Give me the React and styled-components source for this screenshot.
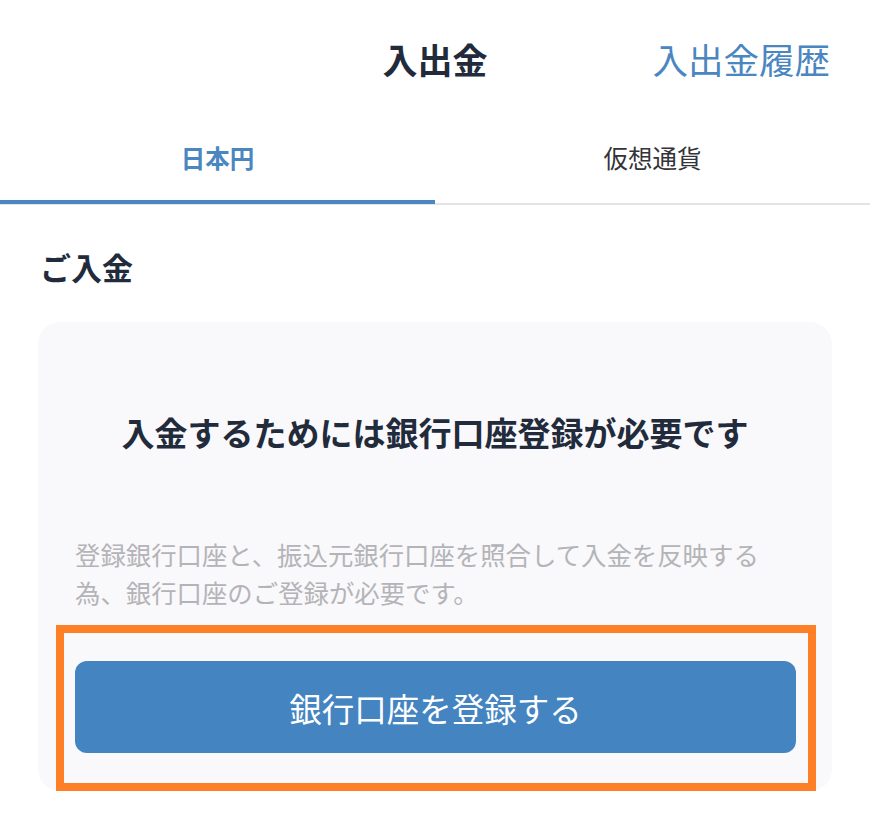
import React, { useState } from "react";
import styled, { createGlobalStyle } from "styled-components";

const GlobalStyle = createGlobalStyle`
    body {
        margin: 0;
        background: #ffffff;
        font-family: "Noto Sans CJK JP", "Noto Sans", sans-serif;
    }
`;

const Page = styled.div`
    width: 870px;
    min-height: 822px;
    background: #ffffff;
`;

const Header = styled.header`
    height: 118px;
    display: grid;
    grid-template-columns: 1fr auto 1fr;
    align-items: center;
    padding-bottom: 2px;
    box-sizing: border-box;
`;

const Title = styled.h1`
    grid-column: 2;
    margin: 0;
    font-size: 35px;
    font-weight: 700;
    color: #222b3b;
`;

const HistoryLink = styled.a`
    justify-self: end;
    padding-right: 40px;
    font-size: 35.5px;
    font-weight: 400;
    color: #4a86bf;
    text-decoration: none;
`;

const TabBar = styled.nav`
    display: flex;
    border-bottom: 2px solid #e4e4e6;
`;

const Tab = styled.button`
    flex: 1;
    height: 86px;
    padding: 0 0 4px;
    border: none;
    border-bottom: 4px solid ${(p) => (p.$active ? "#4a86bf" : "transparent")};
    margin-bottom: -1px;
    background: none;
    font-family: inherit;
    font-size: 24.5px;
    font-weight: ${(p) => (p.$active ? 700 : 400)};
    color: ${(p) => (p.$active ? "#4a86bf" : "#333338")};
    cursor: pointer;
`;

const SectionTitle = styled.h2`
    margin: 40px 0 34px 40px;
    font-size: 31px;
    line-height: 43px;
    font-weight: 700;
    color: #222b3b;
`;

const Card = styled.section`
    margin: 0 38px;
    padding: 87px 0 0;
    background: #f9f8fa;
    border-radius: 22px;
`;

const CardTitle = styled.h3`
    margin: 0;
    text-align: center;
    font-size: 33px;
    line-height: 46px;
    font-weight: 700;
    color: #222b3b;
`;

const Description = styled.p`
    margin: 80px 0 14px 37px;
    max-width: 700px;
    font-size: 25.4px;
    line-height: 38px;
    color: #b4b4b8;
`;

const Highlight = styled.div`
    margin: 0 16px -2px 18px;
    padding: 28px 12px 30px 11px;
    border: 8px solid #ff7f27;
`;

const PrimaryButton = styled.button`
    display: flex;
    align-items: center;
    justify-content: center;
    width: 100%;
    height: 92px;
    border: none;
    border-radius: 12px;
    background: #4384c1;
    color: #ffffff;
    font-family: inherit;
    font-size: 32.5px;
    font-weight: 400;
    cursor: pointer;
`;

const tabs = ["日本円", "仮想通貨"];

export default function App() {
    const [active, setActive] = useState(0);

    return (
        <Page>
            <GlobalStyle />
            <Header>
                <Title>入出金</Title>
                <HistoryLink href="#">入出金履歴</HistoryLink>
            </Header>
            <TabBar>
                {tabs.map((label, i) => (
                    <Tab key={label} $active={i === active} onClick={() => setActive(i)}>
                        {label}
                    </Tab>
                ))}
            </TabBar>
            <SectionTitle>ご入金</SectionTitle>
            <Card>
                <CardTitle>入金するためには銀行口座登録が必要です</CardTitle>
                <Description>
                    登録銀行口座と、振込元銀行口座を照合して入金を反映する為、銀行口座のご登録が必要です。
                </Description>
                <Highlight>
                    <PrimaryButton>銀行口座を登録する</PrimaryButton>
                </Highlight>
            </Card>
        </Page>
    );
}
